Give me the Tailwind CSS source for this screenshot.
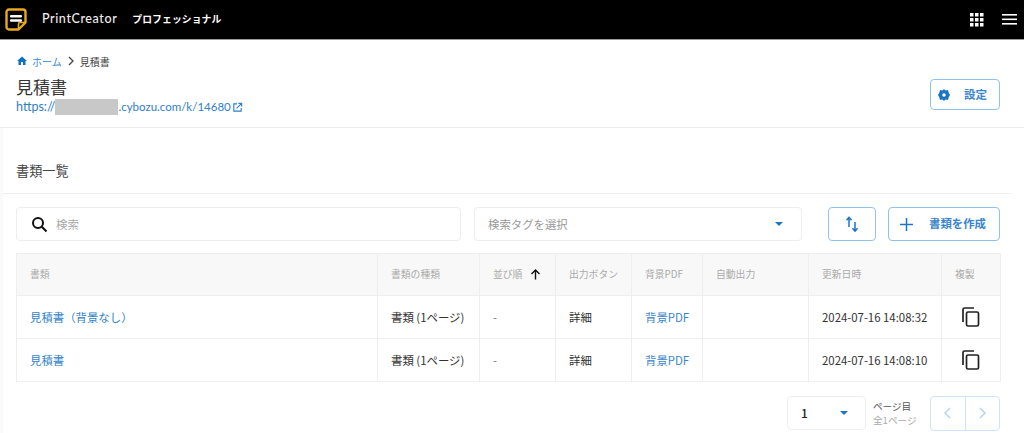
<!DOCTYPE html>
<html lang="ja">
<head>
<meta charset="UTF-8">
<title>書類一覧</title>
<script src="https://cdn.jsdelivr.net/npm/@tailwindcss/browser@4"></script>
</head>
<body class="bg-white h-[433px] overflow-hidden font-['Noto_Sans_CJK_JP','Noto_Sans',sans-serif] text-[#333]">
  <!-- header -->
  <header class="h-10 bg-black border-b border-[#999] flex items-center pl-[5px] pr-[7px] text-white">
    <svg class="w-[22px] h-[23px]" viewBox="0 0 22 23" fill="none">
      <path d="M4 1.500h14a2.500 2.500 0 0 1 2.500 2.500v10.500l-7 7H4A2.500 2.500 0 0 1 1.500 19V4A2.500 2.500 0 0 1 4 1.500z" stroke="#e8a91c" stroke-width="2.400" stroke-linejoin="round"/>
      <path d="M13.500 21v-5a1.500 1.500 0 0 1 1.500-1.500h5" stroke="#e8a91c" stroke-width="1.600"/>
      <rect x="5" y="7" width="12" height="2.400" rx="1" fill="#fff"/>
      <rect x="5" y="11.300" width="12" height="2.400" rx="1" fill="#fff"/>
    </svg>
    <span class="ml-[15px] font-['Lato',sans-serif] text-[12.500px] font-medium tracking-[0.6px] text-[#eee]">PrintCreator</span>
    <span class="ml-[15px] text-[9.800px] font-bold tracking-[0.1px]">プロフェッショナル</span>
    <div class="ml-auto flex items-center gap-[18px]">
      <svg class="w-[14px] h-[14px]" viewBox="0 0 14 14" fill="#fff">
        <rect x="0" y="0" width="3.500" height="3.500"/><rect x="5" y="0" width="3.500" height="3.500"/><rect x="10" y="0" width="3.500" height="3.500"/>
        <rect x="0" y="5" width="3.500" height="3.500"/><rect x="5" y="5" width="3.500" height="3.500"/><rect x="10" y="5" width="3.500" height="3.500"/>
        <rect x="0" y="10" width="3.500" height="3.500"/><rect x="5" y="10" width="3.500" height="3.500"/><rect x="10" y="10" width="3.500" height="3.500"/>
      </svg>
      <svg class="w-[15px] h-[11px]" viewBox="0 0 15 11" fill="#fff">
        <rect y="0" width="15" height="1.600"/><rect y="4.500" width="15" height="1.600"/><rect y="9" width="15" height="1.600"/>
      </svg>
    </div>
  </header>

  <!-- title area -->
  <section class="h-[88px] border-b border-[#eee] pl-4 pr-6 pt-[13px] flex justify-between">
    <div>
      <nav class="flex items-center h-4 text-[10px]">
        <svg class="w-3 h-3" viewBox="0 0 24 24" fill="#0e72c4"><path d="M10 20v-6h4v6h5v-8h3L12 3 2 12h3v8z"/></svg>
        <a class="ml-[4px] text-[#3b8ad2]">ホーム</a>
        <svg class="w-[10px] h-[10px] ml-[4px]" viewBox="0 0 10 10" fill="none" stroke="#444" stroke-width="1.300"><path d="M3 1l4 4-4 4"/></svg>
        <span class="ml-[4px] text-[#444]">見積書</span>
      </nav>
      <h1 class="mt-[6px] text-[17px] leading-[24px] text-[#333]">見積書</h1>
      <a class="flex items-center h-[16px] text-[11.500px] font-['Lato',sans-serif] text-[#2f7fc9]"><span class="text-[12.500px]">https://</span><span class="inline-block w-[63px] h-[16px] bg-[#c8c8c8]"></span>.cybozu.com/k/14680<svg class="w-[11px] h-[11px] ml-[1px]" viewBox="0 0 24 24" fill="none" stroke="#2f7fc9" stroke-width="2.500"><path d="M11 4H4v16h16v-7M14 3h7v7M21 3L10 14"/></svg></a>
    </div>
    <button class="mt-[26px] w-[70px] h-[31px] border border-[#8fc3ec] rounded-[4px] flex items-center pl-[7px] text-[11.500px] font-bold text-[#3b85cc] bg-white">
      <svg class="w-[12px] h-[12px]" viewBox="0 0 24 24" fill="#1b76c6"><path fill-rule="evenodd" d="M12 0l3 3.200 5-1 1.300 5L24 12l-2.700 4.800-1.300 5-5-1L12 24l-3-3.200-5 1-1.300-5L0 12l2.700-4.800 1.300-5 5 1zm0 8.500a3.500 3.500 0 1 0 0 7 3.500 3.500 0 0 0 0-7z"/></svg>
      <span class="ml-[14px]">設定</span>
    </button>
  </section>

  <div class="h-[306px] shadow-[inset_3px_0_0_#fafafa]">
    <!-- list title -->
    <h2 class="h-[66px] ml-[3px] mr-[12px] pl-[13px] pt-[33px] text-[13.200px] leading-[20px] border-b border-[#f0f0f0] text-[#444]">書類一覧</h2>

    <!-- toolbar -->
    <div class="flex items-center mt-[13px] px-4 h-[34px]">
      <div class="w-[445px] h-[34px] border border-[#eee] rounded-[4px] flex items-center pl-[14px] bg-white">
        <svg class="w-[17px] h-[17px]" viewBox="0 0 17 17" fill="none" stroke="#111" stroke-width="2"><circle cx="7" cy="7" r="5"/><path d="M10.800 10.800L15.500 15.500"/></svg>
        <span class="ml-[8px] pt-[1px] text-[11.500px] text-[#aaa]">検索</span>
      </div>
      <div class="ml-[13px] w-[328px] h-[34px] border border-[#eee] rounded-[4px] flex items-center justify-between pl-[13px] pr-[18px] text-[11.400px] text-[#999]">
        <span class="pt-[1px]">検索タグを選択</span>
        <span class="w-0 h-0 border-x-[4px] border-x-transparent border-t-[4px] border-t-[#1b76c6]"></span>
      </div>
      <button class="ml-[26px] w-[48px] h-[34px] border border-[#8fc3ec] rounded-[4px] flex items-center justify-center">
        <svg class="w-[14px] h-[16px]" viewBox="0 0 14 16" fill="none" stroke="#1b76c6" stroke-width="1.500"><path d="M4 11V1.500M1.500 4.200L4 1.300l2.500 2.900M10 6v9M7.500 12.300l2.500 2.900 2.500-2.900"/></svg>
      </button>
      <button class="ml-[12px] w-[112px] h-[34px] border border-[#8fc3ec] rounded-[4px] flex items-center pl-[11px] text-[11.400px] font-bold text-[#3b85cc]">
        <svg class="w-[13px] h-[13px]" viewBox="0 0 13 13" stroke="#1b76c6" stroke-width="1.500"><path d="M6.500 0v13M0 6.500h13"/></svg>
        <span class="ml-[16px]">書類を作成</span>
      </button>
    </div>

    <!-- table -->
    <div class="mx-4 mt-[12px]">
      <table class="w-[984px] table-fixed border-collapse text-[11.400px] text-[#333]">
        <colgroup>
          <col class="w-[361px]"><col class="w-[102px]"><col class="w-[76px]"><col class="w-[76px]"><col class="w-[71px]"><col class="w-[106px]"><col class="w-[133px]"><col class="w-[59px]">
        </colgroup>
        <thead>
          <tr class="h-[42px] bg-[#f8f8f8] text-[9.800px] text-[#aaa] text-left">
            <th class="font-normal border border-[#eee] pl-[13px]">書類</th>
            <th class="font-normal border border-[#eee] pl-[13px]">書類の種類</th>
            <th class="font-normal border border-[#eee] pl-[13px]">
              <span class="flex items-center">並び順<svg class="w-[11px] h-[11px] ml-[8px]" viewBox="0 0 11 11" fill="none" stroke="#111" stroke-width="1.400"><path d="M5.500 10.500V1M1.500 5l4-4 4 4"/></svg></span>
            </th>
            <th class="font-normal border border-[#eee] pl-[13px]">出力ボタン</th>
            <th class="font-normal border border-[#eee] pl-[13px]">背景PDF</th>
            <th class="font-normal border border-[#eee] pl-[13px]">自動出力</th>
            <th class="font-normal border border-[#eee] pl-[13px]">更新日時</th>
            <th class="font-normal border border-[#eee] pl-[13px]">複製</th>
          </tr>
        </thead>
        <tbody>
          <tr class="h-[43px] [&>td:not(:last-child)]:pt-[1px]">
            <td class="border border-[#eee] pl-[13px] text-[#2f7fc9]">見積書（背景なし）</td>
            <td class="border border-[#eee] pl-[13px]">書類 (1ページ)</td>
            <td class="border border-[#eee] pl-[13px] text-[#777]">-</td>
            <td class="border border-[#eee] pl-[13px]">詳細</td>
            <td class="border border-[#eee] pl-[13px] text-[#3b85cc]">背景PDF</td>
            <td class="border border-[#eee]"></td>
            <td class="border border-[#eee] pl-[13px]">2024-07-16 14:08:32</td>
            <td class="border border-[#eee] pl-[20px]">
              <svg class="w-[18px] h-[20px]" viewBox="0 0 18 20" fill="none" stroke="#222" stroke-width="1.700"><path d="M1 15V2.500A1.500 1.500 0 0 1 2.500 1H12"/><rect x="4.500" y="5" width="12" height="14" rx="1.500"/></svg>
            </td>
          </tr>
          <tr class="h-[43px] [&>td:not(:last-child)]:pt-[1px]">
            <td class="border border-[#eee] pl-[13px] text-[#2f7fc9]">見積書</td>
            <td class="border border-[#eee] pl-[13px]">書類 (1ページ)</td>
            <td class="border border-[#eee] pl-[13px] text-[#777]">-</td>
            <td class="border border-[#eee] pl-[13px]">詳細</td>
            <td class="border border-[#eee] pl-[13px] text-[#3b85cc]">背景PDF</td>
            <td class="border border-[#eee]"></td>
            <td class="border border-[#eee] pl-[13px]">2024-07-16 14:08:10</td>
            <td class="border border-[#eee] pl-[20px]">
              <svg class="w-[18px] h-[20px]" viewBox="0 0 18 20" fill="none" stroke="#222" stroke-width="1.700"><path d="M1 15V2.500A1.500 1.500 0 0 1 2.500 1H12"/><rect x="4.500" y="5" width="12" height="14" rx="1.500"/></svg>
            </td>
          </tr>
        </tbody>
      </table>
    </div>

    <!-- pagination -->
    <div class="flex justify-end items-center mt-[13px] pr-6 h-[36px]">
      <div class="w-[79px] h-[34px] border border-[#eee] rounded-[4px] flex items-center justify-between pl-[13px] pr-[17px] text-[12px] font-medium text-[#222]">
        1
        <span class="w-0 h-0 border-x-[4px] border-x-transparent border-t-[4px] border-t-[#1b76c6]"></span>
      </div>
      <div class="ml-[7px] w-[57px] text-[9.600px] leading-[14px]">
        <div class="text-[#555]">ページ目</div>
        <div class="text-[#aaa]">全1ページ</div>
      </div>
      <div class="w-[70px] h-[35px] border border-[#cfe4f6] rounded-[4px] flex divide-x divide-[#cfe4f6]">
        <span class="flex-1 flex items-center justify-center">
          <svg class="w-[9px] h-[12px]" viewBox="0 0 9 12" fill="none" stroke="#b7d8f3" stroke-width="1.600"><path d="M7 1L2 6l5 5"/></svg>
        </span>
        <span class="flex-1 flex items-center justify-center">
          <svg class="w-[9px] h-[12px]" viewBox="0 0 9 12" fill="none" stroke="#b7d8f3" stroke-width="1.600"><path d="M2 1l5 5-5 5"/></svg>
        </span>
      </div>
    </div>
  </div>
</body>
</html>
